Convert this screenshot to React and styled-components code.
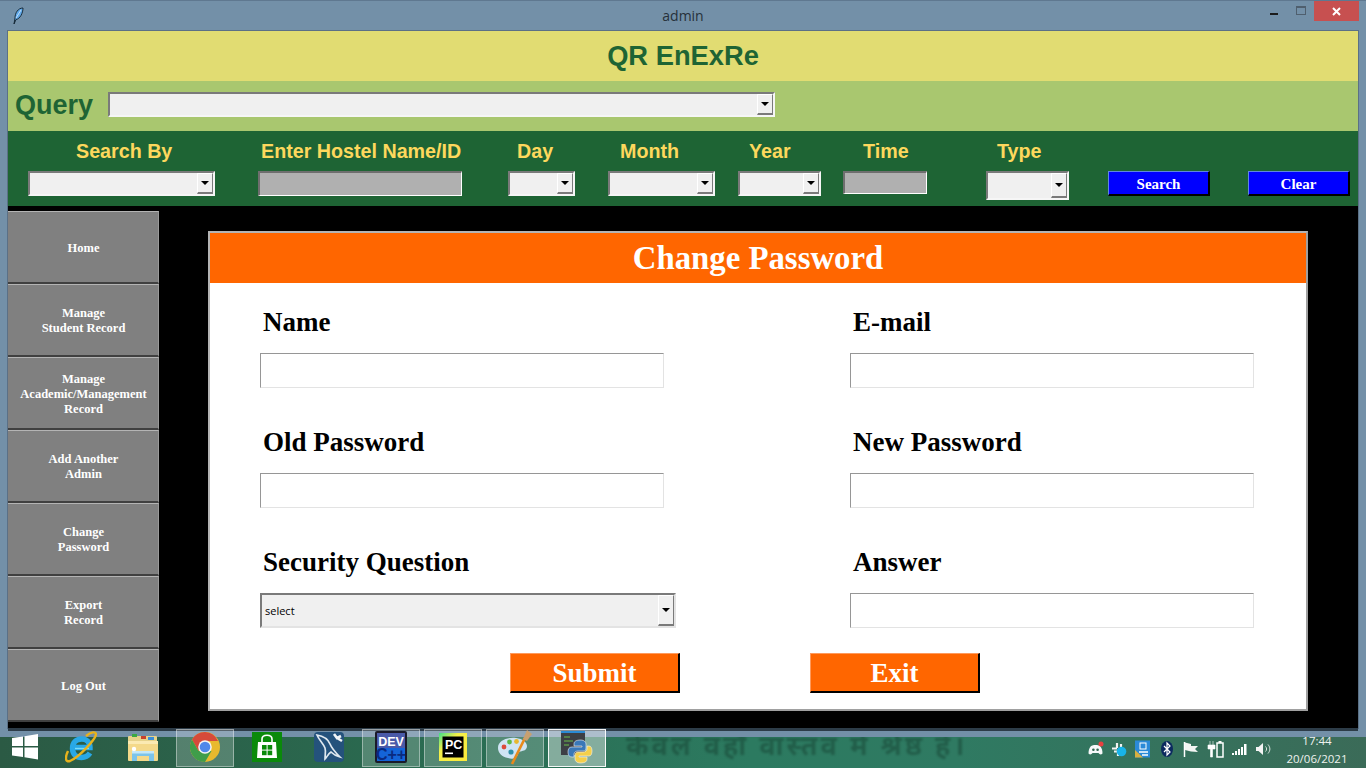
import React from "react";
import styled, { createGlobalStyle } from "styled-components";

const GlobalStyle = createGlobalStyle`
  html, body {
    margin: 0;
    padding: 0;
    background: #000;
    overflow: hidden;
  }
  * {
    box-sizing: border-box;
  }
`;

const Desktop = styled.div`
  position: relative;
  width: 1366px;
  height: 768px;
  overflow: hidden;
  background: linear-gradient(90deg, #2b5a44 0%, #2a6a50 30%, #2c7a60 55%, #2f7a62 70%, #3b6b58 100%);
`;

const Wallpaper = styled.div`
  position: absolute;
  left: 626px;
  top: 726px;
  font-family: "Noto Sans", "DejaVu Sans", sans-serif;
  font-size: 27px;
  font-weight: 700;
  letter-spacing: 3px;
  white-space: nowrap;
  color: #12382a;
  opacity: 0.42;
  filter: blur(1px);
`;

const Window = styled.div`
  position: relative;
  height: 737px;
  background: #7390a8;
  border-top: 1px solid #5f7890;
  display: flex;
  flex-direction: column;
`;

const TitleBar = styled.div`
  height: 30px;
  display: grid;
  grid-template-columns: 1fr auto 1fr;
  align-items: start;
`;

const Quill = styled.svg`
  width: 12px;
  height: 18px;
  margin: 6px 0 0 12px;
`;

const WindowTitle = styled.div`
  font-family: "Open Sans", "Noto Sans", sans-serif;
  font-size: 14px;
  line-height: 30px;
  color: #26303a;
`;

const WindowControls = styled.div`
  display: flex;
  justify-content: flex-end;
  padding-right: 7px;
`;

const ControlSlot = styled.div`
  width: 26px;
  height: 20px;
  display: flex;
  align-items: center;
  justify-content: center;
`;

const MinimizeMark = styled.div`
  width: 8px;
  height: 2px;
  margin: 6px 2px 0 0;
  background: #1c1c1c;
`;

const MaximizeMark = styled.div`
  width: 10px;
  height: 9px;
  margin-top: -2px;
  border: 1px solid #4f5f6e;
  border-top-width: 2px;
`;

const CloseButton = styled.div`
  width: 45px;
  height: 20px;
  background: #c75050;
  display: flex;
  align-items: center;
  justify-content: center;
`;

const Content = styled.div`
  height: 697px;
  margin: 0 8px;
  background: #000;
  box-shadow: 0 0 0 1px #5b7086;
  display: flex;
  flex-direction: column;
`;

const BottomEdge = styled.div`
  height: 3px;
  margin: 0 8px;
  background: #2d3c48;
`;

const TitleRow = styled.div`
  height: 50px;
  background: #e1dc72;
  display: flex;
  align-items: center;
  justify-content: center;
`;

const AppName = styled.h1`
  margin: 0;
  font-family: "Liberation Sans", Arial, sans-serif;
  font-size: 27.3px;
  font-weight: 700;
  color: #1e6434;
`;

const QueryRow = styled.div`
  height: 50px;
  background: #a9c76f;
  display: flex;
  align-items: flex-start;
  padding-left: 7px;
`;

const QueryLabel = styled.div`
  width: 93px;
  font-family: "Liberation Sans", Arial, sans-serif;
  font-size: 27px;
  font-weight: 700;
  line-height: 49px;
  color: #1e6434;
`;

const ComboBox = styled.div`
  width: ${(p) => p.$w}px;
  height: ${(p) => p.$h || 25}px;
  background: #f0f0f0;
  border: 2px solid;
  border-color: #7a7a7a #f6f6f6 #f6f6f6 #7a7a7a;
  display: flex;
  align-items: stretch;
  justify-content: space-between;
  font-family: "Open Sans", "Noto Sans", sans-serif;
  font-size: 11px;
  color: #000;
`;

const QueryCombo = styled(ComboBox)`
  margin-top: 11px;
`;

const FormCombo = styled(ComboBox)`
  border-color: #7a7a7a #e3e3e3 #e3e3e3 #7a7a7a;
`;

const ComboValue = styled.span`
  padding-left: 3px;
  align-self: center;
`;

const ComboArrow = styled.div`
  width: 16px;
  background: #f0f0f0;
  border: 1px solid;
  border-color: #fff #7a7a7a #7a7a7a #fff;
  border-bottom-width: 2px;
  display: flex;
  align-items: center;
  justify-content: center;

  &::after {
    content: "";
    border-left: 4px solid transparent;
    border-right: 4px solid transparent;
    border-top: 4px solid #000;
  }
`;

const FilterBar = styled.div`
  height: 75px;
  background: #1e6434;
  display: flex;
  align-items: flex-start;
  padding: 8px 0 0 20px;
`;

const FilterColumn = styled.div`
  width: ${(p) => p.$w}px;
  margin-left: ${(p) => p.$gap || 0}px;
  display: flex;
  flex-direction: column;
`;

const FilterLabel = styled.div`
  height: 24px;
  margin: 0 0 8px ${(p) => p.$x || 0}px;
  font-family: "Liberation Sans", Arial, sans-serif;
  font-size: 19.7px;
  font-weight: 700;
  line-height: 24px;
  white-space: nowrap;
  color: #fdd85d;
`;

const DisabledEntry = styled.input`
  display: block;
  width: 100%;
  height: ${(p) => p.$h || 25}px;
  padding: 0;
  background: #b0b0b0;
  border: 2px solid;
  border-color: #6e6e6e #fff #fff #6e6e6e;
  border-width: 2px 1px 1px 2px;
  outline: 0;
`;

const BlueButton = styled.button`
  display: block;
  width: 102px;
  height: 25px;
  margin-top: 32px;
  margin-left: ${(p) => p.$gap}px;
  padding: 2px 0 0;
  background: #0000ff;
  border: 1px solid;
  border-color: #5f86e0 #000 #000 #5f86e0;
  border-width: 1px 2px 2px 1px;
  font-family: "Liberation Serif", "Times New Roman", serif;
  font-size: 15px;
  font-weight: 700;
  color: #fff;
`;

const Main = styled.div`
  flex: 1;
  display: flex;
  align-items: flex-start;
`;

const Sidebar = styled.nav`
  width: 151px;
  padding-top: 5px;
  display: flex;
  flex-direction: column;
`;

const SideButton = styled.button`
  width: 151px;
  height: 73px;
  padding: 2px 0 0 1px;
  background: #808080;
  border: 0;
  border-top: 1px solid #b4b4b4;
  border-right: 1px solid #9a9a9a;
  border-bottom: 2px solid #404040;
  font-family: "Liberation Serif", "Times New Roman", serif;
  font-size: 12.5px;
  font-weight: 700;
  line-height: 15px;
  color: #fff;
  white-space: pre-line;
`;

const Panel = styled.section`
  width: 1100px;
  height: 480px;
  margin: 25px 0 0 49px;
  background: #fff;
  border: 2px solid;
  border-color: #b4b4b4 #a0a0a0 #a0a0a0 #b4b4b4;
`;

const PanelHeader = styled.h2`
  height: 50px;
  margin: 0;
  background: #ff6600;
  font-family: "Liberation Serif", "Times New Roman", serif;
  font-size: 32.8px;
  font-weight: 700;
  line-height: 50px;
  text-align: center;
  color: #fff;
`;

const FormGrid = styled.div`
  display: grid;
  grid-template-columns: 590px 1fr;
  row-gap: 34px;
  padding: 19px 0 0 50px;
`;

const Field = styled.div`
  display: flex;
  flex-direction: column;
  align-items: flex-start;
`;

const FieldLabel = styled.label`
  height: 40px;
  margin: 0 0 11px 3px;
  font-family: "Liberation Serif", "Times New Roman", serif;
  font-size: 27px;
  font-weight: 700;
  line-height: 41px;
  color: #000;
`;

const TextEntry = styled.input`
  display: block;
  width: 404px;
  height: 35px;
  padding: 0 3px;
  background: #fff;
  border: 1px solid;
  border-color: #969696 #e3e3e3 #e3e3e3 #969696;
  outline: 0;
`;

const ActionRow = styled.div`
  display: flex;
  gap: 130px;
  margin-top: 25px;
  padding-left: 300px;
`;

const OrangeButton = styled.button`
  width: 170px;
  height: 40px;
  padding: 2px 0 0;
  background: #ff6600;
  border: 1px solid;
  border-color: #ff9a5c #000 #000 #ff9a5c;
  border-width: 1px 2px 2px 1px;
  font-family: "Liberation Serif", "Times New Roman", serif;
  font-size: 27px;
  font-weight: 700;
  color: #fff;
`;

const Taskbar = styled.div`
  position: relative;
  height: 39px;
  margin-top: -8px;
  display: flex;
  align-items: flex-start;
  gap: 4px;
  padding-right: 18px;
`;

const StartButton = styled.div`
  width: 48px;
  height: 38px;
  display: flex;
  align-items: center;
  justify-content: center;
  padding: 0 0 2px 2px;
`;

const TaskSlot = styled.div`
  width: 58px;
  height: 38px;
  display: flex;
  align-items: center;
  justify-content: center;
  padding-bottom: 2px;
  background: ${(p) => (p.$active ? "rgba(255,255,255,0.42)" : p.$open ? "rgba(255,255,255,0.2)" : "transparent")};
  border: 1px solid ${(p) => (p.$active ? "rgba(255,255,255,0.9)" : p.$open ? "rgba(255,255,255,0.4)" : "transparent")};
`;

const Tray = styled.div`
  margin-left: auto;
  height: 39px;
  display: flex;
  align-items: center;
`;

const TrayIcon = styled.svg`
  display: block;
  width: 20px;
  height: 20px;
  margin-left: ${(p) => p.$gap || 0}px;
  overflow: visible;
`;

const Clock = styled.div`
  width: 62px;
  margin: 3px 0 0 13px;
  font-family: "Open Sans", "Noto Sans", sans-serif;
  font-size: 11.5px;
  line-height: 18px;
  text-align: center;
  color: #eef2ee;
`;

const WindowsLogo = () => (
  <svg width="28" height="28" viewBox="0 0 28 28">
    <polygon points="1,5 12,3.4 12,13 1,13" fill="#fff" />
    <polygon points="13.5,3.2 27,1 27,13 13.5,13" fill="#fff" />
    <polygon points="1,14.5 12,14.5 12,24 1,22.6" fill="#fff" />
    <polygon points="13.5,14.5 27,14.5 27,26.4 13.5,24.3" fill="#fff" />
  </svg>
);

const IeIcon = () => (
  <svg width="32" height="32" viewBox="0 0 32 32" fill="none">
    <path d="M9 16.5 H25 C25 11 21.5 8 16.5 8 C11 8 7.5 12 7.5 17.5 C7.5 23 11 26.5 16.5 26.5 C20 26.5 23 25 25 22" stroke="#29a8e6" strokeWidth="5.4" />
    <path d="M10 17.5 H24" stroke="#7adcf8" strokeWidth="1.4" />
    <path d="M21 5 C26 1 31 0 31 3.5 C30 9 14 26 5 30 C0 31.5 0 26 3 20" stroke="#e8b21c" strokeWidth="2.4" />
  </svg>
);

const ExplorerIcon = () => (
  <svg width="32" height="32" viewBox="0 0 32 32">
    <rect x="1" y="5" width="29" height="8" rx="1" fill="#e6d28a" />
    <rect x="5" y="3" width="5" height="3" fill="#3aa844" />
    <rect x="14" y="5" width="5" height="3" fill="#c8402c" />
    <rect x="21" y="6" width="6" height="3" fill="#3c8fd8" />
    <rect x="1" y="10" width="30" height="20" rx="1" fill="#f4d98a" />
    <rect x="1" y="10" width="30" height="3" fill="#fbeab2" />
    <path d="M5 30 V20 H27 V30 H22 V25 H10 V30 Z" fill="#7cc4ea" />
    <path d="M5 20 H27 V22.5 H5 Z" fill="#c4e8f8" />
    <circle cx="7" cy="18" r="2.2" fill="#fff" />
  </svg>
);

const ChromeIcon = () => (
  <svg width="30" height="30" viewBox="0 0 30 30">
    <circle cx="15" cy="15" r="15" fill="#e8b92e" />
    <path d="M15 0 A15 15 0 0 0 2 7.5 L8.5 19 L15 9 H28 A15 15 0 0 0 15 0 Z" fill="#d64a3a" />
    <path d="M2 7.5 A15 15 0 0 0 15 30 L21.5 19 H8.5 Z" fill="#3f9d4a" />
    <circle cx="15" cy="15" r="6.8" fill="#f4f4f4" />
    <circle cx="15" cy="15" r="5.3" fill="#4f88ea" />
  </svg>
);

const StoreIcon = () => (
  <svg width="30" height="30" viewBox="0 0 30 30">
    <rect width="30" height="30" fill="#0a8a0a" />
    <path d="M6 10 H24 L25 26 H5 Z" fill="#fff" />
    <path d="M10 10 V7 C10 2 20 2 20 7 V10" fill="none" stroke="#fff" strokeWidth="1.6" />
    <rect x="10" y="13" width="4.6" height="4.6" fill="#0a8a0a" />
    <rect x="15.6" y="13" width="4.6" height="4.6" fill="#0a8a0a" />
    <rect x="10" y="18.6" width="4.6" height="4.6" fill="#0a8a0a" />
    <rect x="15.6" y="18.6" width="4.6" height="4.6" fill="#0a8a0a" />
  </svg>
);

const MysqlIcon = () => (
  <svg width="32" height="32" viewBox="0 0 32 32" fill="none">
    <rect x="1" y="1" width="30" height="30" rx="4" fill="#24527c" />
    <path d="M4 4 C10 5 15 8 17 13 C19 18 22 21 27 26 C23 25 20 23 18 21 C15 23 14 26 12 28 C12 24 13 20 12 17 C10 12 6 9 4 4 Z" stroke="#dfe8ef" strokeWidth="1.7" />
    <path d="M21 3 L24 7 L28 5 M24 7 L29 10" stroke="#f0f4f7" strokeWidth="2.6" />
  </svg>
);

const DevCppIcon = () => (
  <svg width="32" height="32" viewBox="0 0 32 32">
    <rect width="32" height="32" rx="2" fill="#1a1a2a" />
    <rect x="2" y="2" width="28" height="15" fill="#4a5aa8" />
    <rect x="2" y="17" width="28" height="13" fill="#1464d8" />
    <text x="16" y="14.5" textAnchor="middle" fontFamily="Liberation Sans" fontWeight="700" fontSize="12.5" fill="#fff">DEV</text>
    <text x="16" y="29" textAnchor="middle" fontFamily="Liberation Sans" fontWeight="700" fontSize="16" fill="#0a2a80">C++</text>
  </svg>
);

const PycharmIcon = () => (
  <svg width="28" height="28" viewBox="0 0 28 28">
    <defs>
      <linearGradient id="pc" x1="0" y1="0" x2="1" y2="1">
        <stop offset="0" stopColor="#3de08a" />
        <stop offset="0.35" stopColor="#f4f04a" />
        <stop offset="1" stopColor="#fbe83a" />
      </linearGradient>
    </defs>
    <rect width="28" height="28" fill="url(#pc)" />
    <rect x="3.5" y="3.5" width="21" height="21" fill="#000" />
    <text x="6" y="15.5" fontFamily="Liberation Sans" fontWeight="700" fontSize="12.5" fill="#fff">PC</text>
    <rect x="6" y="19.5" width="8" height="1.6" fill="#fff" />
  </svg>
);

const PaintIcon = () => (
  <svg width="36" height="36" viewBox="0 0 36 36">
    <path d="M1 19 C1 11 11 8 19 9 C28 10 32 16 29 20 C27 23 22 21 21 25 C20 29 16 31 11 29 C5 28 1 24 1 19 Z" fill="#cfe4f4" />
    <circle cx="7" cy="18" r="2.4" fill="#dc4a3c" />
    <circle cx="12.5" cy="13" r="2.4" fill="#5cb848" />
    <circle cx="19.5" cy="12.5" r="2.4" fill="#e8b830" />
    <circle cx="14" cy="23" r="2.6" fill="#2f8fa8" />
    <path d="M15 35 L28 9" stroke="#e88a1c" strokeWidth="2.6" />
    <path d="M26 10 L30 1 L35 5 L30 12 Z" fill="#c8a070" />
  </svg>
);

const IdleIcon = () => (
  <svg width="32" height="34" viewBox="0 0 32 34">
    <rect x="0" y="1" width="24" height="24" fill="#3c3f44" />
    <rect x="0" y="1" width="24" height="2" fill="#2a8ad4" />
    <path d="M3 7 H9 M3 11 H12 M3 15 H8" stroke="#6ac04a" strokeWidth="1" />
    <path d="M20 10 C14 10 13 12 13 14 V16 H21 V17 H11 C8 17 7 19 7 22 C7 25 8 27 11 27 H13 V24 C13 22 15 21 17 21 H22 C24 21 25 20 25 18 V14 C25 12 23 10 20 10 Z" fill="#3a78b8" stroke="#f4f4f4" strokeWidth="0.6" />
    <path d="M22 33 C28 33 29 31 29 29 V27 H21 V26 H31 C33 26 34 24 34 21 C34 18 33 16 31 16 H29 V19 C29 21 27 22 25 22 H20 C18 22 17 23 17 25 V29 C17 31 19 33 22 33 Z" fill="#f4cf4a" stroke="#f4f4f4" strokeWidth="0.6" transform="translate(-3 0)" />
  </svg>
);

const filters = [
  { label: "Search By", w: 187, gap: 0, x: 48, kind: "combo" },
  { label: "Enter Hostel Name/ID", w: 204, gap: 43, x: 3, kind: "entry" },
  { label: "Day", w: 67, gap: 46, x: 9, kind: "combo" },
  { label: "Month", w: 107, gap: 33, x: 12, kind: "combo" },
  { label: "Year", w: 83, gap: 23, x: 11, kind: "combo" },
  { label: "Time", w: 84, gap: 22, x: 20, kind: "entry", h: 23 },
  { label: "Type", w: 83, gap: 59, x: 11, kind: "combo", h: 29 },
];

const sideItems = [
  "Home",
  "Manage\nStudent Record",
  "Manage\nAcademic/Management\nRecord",
  "Add Another\nAdmin",
  "Change\nPassword",
  "Export\nRecord",
  "Log Out",
];

const taskItems = [
  { key: "ie", icon: <IeIcon /> },
  { key: "explorer", icon: <ExplorerIcon /> },
  { key: "chrome", icon: <ChromeIcon />, open: true },
  { key: "store", icon: <StoreIcon /> },
  { key: "mysql", icon: <MysqlIcon /> },
  { key: "dev", icon: <DevCppIcon />, open: true },
  { key: "pycharm", icon: <PycharmIcon />, open: true },
  { key: "paint", icon: <PaintIcon />, open: true },
  { key: "idle", icon: <IdleIcon />, active: true },
];

const App = () => {
  return (
    <Desktop>
      <GlobalStyle />
      <Wallpaper>केवल वहाँ वास्तव में श्रेष्ठ है।</Wallpaper>
      <Window>
        <TitleBar>
          <Quill viewBox="0 0 12 18">
            <path d="M11 1 C6 1 3 6 3 11 L2 17 L4 12.5 C8 12 11 6 11 1 Z" fill="#5fa8e8" stroke="#10202c" strokeWidth="0.9" />
            <path d="M9 3 L4 11" stroke="#dcecfa" strokeWidth="0.8" />
          </Quill>
          <WindowTitle>admin</WindowTitle>
          <WindowControls>
            <ControlSlot>
              <MinimizeMark />
            </ControlSlot>
            <ControlSlot>
              <MaximizeMark />
            </ControlSlot>
            <CloseButton>
              <svg width="9" height="9" viewBox="0 0 9 9">
                <path d="M1 1 L8 8 M8 1 L1 8" stroke="#fff" strokeWidth="2" />
              </svg>
            </CloseButton>
          </WindowControls>
        </TitleBar>
        <Content>
          <TitleRow>
            <AppName>QR EnExRe</AppName>
          </TitleRow>
          <QueryRow>
            <QueryLabel>Query</QueryLabel>
            <QueryCombo $w={667}>
              <ComboValue />
              <ComboArrow />
            </QueryCombo>
          </QueryRow>
          <FilterBar>
            {filters.map((f) => (
              <FilterColumn key={f.label} $w={f.w} $gap={f.gap}>
                <FilterLabel $x={f.x}>{f.label}</FilterLabel>
                {f.kind === "combo" ? (
                  <ComboBox $w={f.w} $h={f.h}>
                    <ComboValue />
                    <ComboArrow />
                  </ComboBox>
                ) : (
                  <DisabledEntry disabled $h={f.h} />
                )}
              </FilterColumn>
            ))}
            <BlueButton $gap={39}>Search</BlueButton>
            <BlueButton $gap={38}>Clear</BlueButton>
          </FilterBar>
          <Main>
            <Sidebar>
              {sideItems.map((item) => (
                <SideButton key={item}>{item}</SideButton>
              ))}
            </Sidebar>
            <Panel>
              <PanelHeader>Change Password</PanelHeader>
              <FormGrid>
                <Field>
                  <FieldLabel>Name</FieldLabel>
                  <TextEntry />
                </Field>
                <Field>
                  <FieldLabel>E-mail</FieldLabel>
                  <TextEntry />
                </Field>
                <Field>
                  <FieldLabel>Old Password</FieldLabel>
                  <TextEntry />
                </Field>
                <Field>
                  <FieldLabel>New Password</FieldLabel>
                  <TextEntry />
                </Field>
                <Field>
                  <FieldLabel>Security Question</FieldLabel>
                  <FormCombo $w={416} $h={35}>
                    <ComboValue>select</ComboValue>
                    <ComboArrow />
                  </FormCombo>
                </Field>
                <Field>
                  <FieldLabel>Answer</FieldLabel>
                  <TextEntry />
                </Field>
              </FormGrid>
              <ActionRow>
                <OrangeButton>Submit</OrangeButton>
                <OrangeButton>Exit</OrangeButton>
              </ActionRow>
            </Panel>
          </Main>
        </Content>
        <BottomEdge />
      </Window>
      <Taskbar>
        <StartButton>
          <WindowsLogo />
        </StartButton>
        {taskItems.map((t) => (
          <TaskSlot key={t.key} $open={t.open} $active={t.active}>
            {t.icon}
          </TaskSlot>
        ))}
        <Tray>
          <TrayIcon viewBox="0 0 20 20">
            <path d="M5 7 C7 5.5 12 5.5 14 7 C16 9 16.5 12 16.5 14.5 C15 16 13.5 15.5 12.5 14 H6.5 C5.5 15.5 4 16 2.5 14.5 C2.5 12 3 9 5 7 Z" fill="#f6f8fa" />
            <circle cx="7.4" cy="10.8" r="1.3" fill="#2f6650" />
            <circle cx="11.6" cy="10.8" r="1.3" fill="#2f6650" />
            <circle cx="15" cy="5" r="2.5" fill="#e84040" />
          </TrayIcon>
          <TrayIcon $gap={2} viewBox="0 0 20 20">
            <path d="M9 4 V9 M4 9.5 H9 M6 12.5 H10 M10 12.5 V17 M13 5 V8" stroke="#f4f4f4" strokeWidth="2.2" />
            <circle cx="13.5" cy="12.5" r="4.8" fill="#18b4e8" />
          </TrayIcon>
          <TrayIcon $gap={1} viewBox="0 0 20 20">
            <rect x="6" y="1.5" width="15" height="17" fill="#2a8ad8" />
            <path d="M6 18.5 V11 L14 18.5 Z" fill="#d8b040" />
            <rect x="11" y="4" width="6" height="6" fill="none" stroke="#fff" strokeWidth="1" />
            <path d="M10 13 H19 M13 16 H19" stroke="#fff" strokeWidth="1.3" />
          </TrayIcon>
          <TrayIcon $gap={8} viewBox="0 0 20 20">
            <ellipse cx="10" cy="10" rx="6" ry="8" fill="#0c2a60" />
            <path d="M7 7 L13 13 L10 16 V4 L13 7 L7 13" fill="none" stroke="#fff" strokeWidth="1.2" />
          </TrayIcon>
          <TrayIcon $gap={3} viewBox="0 0 20 20">
            <path d="M4.5 3 V18" stroke="#fff" strokeWidth="1.5" />
            <path d="M5 3.5 L11 5 V7 L18 7 L15 10 L18 13 L11 12.5 L5 11 Z" fill="#f4f6f4" />
          </TrayIcon>
          <TrayIcon $gap={6} viewBox="0 0 20 20">
            <path d="M4 2 V6 M7 2 V6 M2 6 H9 V10 H6.5 V18 H4.5 V10 H2 Z" fill="#fff" stroke="#fff" strokeWidth="0.6" />
            <rect x="11" y="4" width="6" height="14" fill="none" stroke="#fff" strokeWidth="1.5" />
            <rect x="12.5" y="2" width="3" height="2" fill="#fff" />
          </TrayIcon>
          <TrayIcon $gap={4} viewBox="0 0 20 20">
            <rect x="2" y="14" width="2" height="2" fill="#fff" />
            <rect x="5" y="12" width="2" height="4" fill="#fff" />
            <rect x="8" y="10" width="2" height="6" fill="#fff" />
            <rect x="11" y="8" width="2" height="8" fill="#fff" />
            <rect x="14" y="5" width="2.5" height="11" fill="#fff" />
          </TrayIcon>
          <TrayIcon $gap={3} viewBox="0 0 20 20">
            <path d="M3 8 H5.5 L10 4 V16 L5.5 12 H3 Z" fill="#f4f4f4" />
            <path d="M12.5 7.5 C14 9 14 11 12.5 12.5 M15 5.5 C17.5 8.5 17.5 11.5 15 14.5" fill="none" stroke="#d8e4de" strokeWidth="1" />
          </TrayIcon>
          <Clock>
            17:44
            <br />
            20/06/2021
          </Clock>
        </Tray>
      </Taskbar>
    </Desktop>
  );
};

export default App;
